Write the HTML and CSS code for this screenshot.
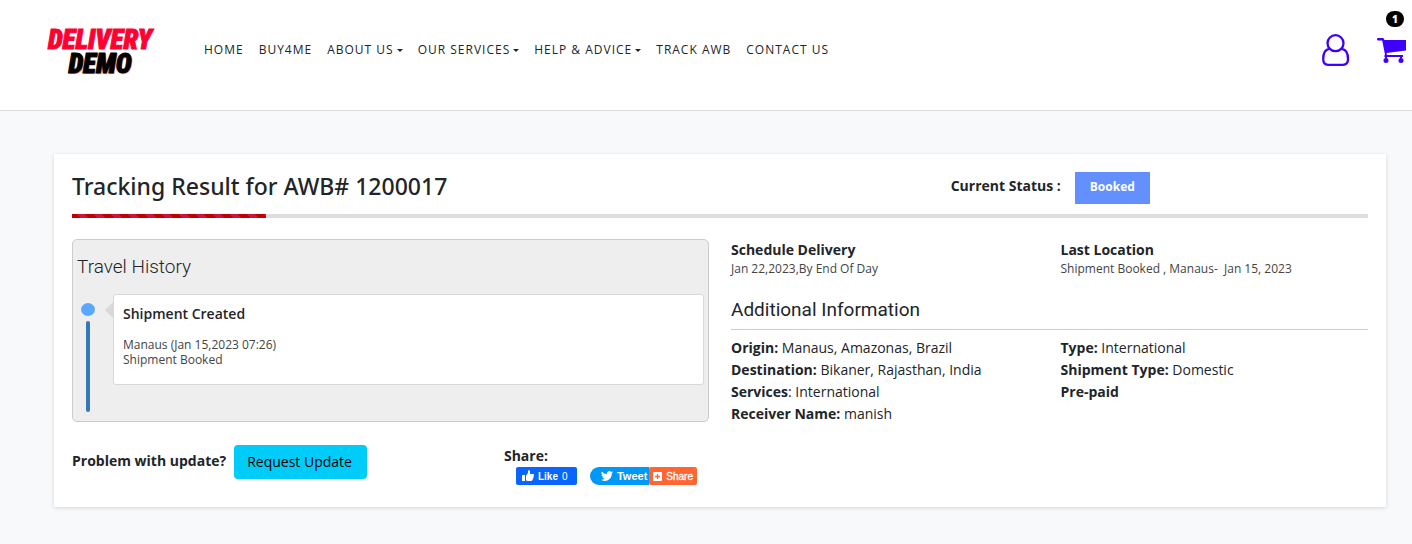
FILE: index.html
```
<!DOCTYPE html>
<html lang="en">
<head>
    <meta charset="UTF-8">
    <meta name="viewport" content="width=device-width, initial-scale=1.0">
    <title>Delivery Demo - Tracking Result</title>
    <link rel="stylesheet" href="styles.css">
</head>
<body>
    <header class="site-header">
        <a class="logo" href="#">
            <span class="logo-top">DELIVERY</span>
            <span class="logo-bottom">DEMO</span>
        </a>
        <nav class="main-nav">
            <a href="#">HOME</a>
            <a href="#">BUY4ME</a>
            <a class="dropdown" href="#">ABOUT US</a>
            <a class="dropdown" href="#">OUR SERVICES</a>
            <a class="dropdown" href="#">HELP &amp; ADVICE</a>
            <a href="#">TRACK AWB</a>
            <a href="#">CONTACT US</a>
        </nav>
        <div class="header-icons">
            <a href="#" aria-label="Account">
                <svg width="28" height="32" viewBox="0 0 28 32" fill="none" stroke="#3d00ff" stroke-width="2.300">
                    <circle cx="13.500" cy="9.200" r="8"/>
                    <path d="M7 14.800C3 15.500 1.200 19.500 1.200 25C1.200 28.800 3 30.800 6 30.800H21C24 30.800 26 28.800 26 25C26 19.500 24 15.500 20 14.800"/>
                </svg>
            </a>
            <a class="cart" href="#" aria-label="Cart">
                <svg width="29" height="26" viewBox="0 0 29 26" fill="#3d00ff">
                    <path d="M1 0H6C7 0 7 1 7.300 2H29V12.500L9.500 15L10 17H26V19H8C7 19 7 18 8 16.500L5.200 2.500H1C-.3 2.500-.3 0 1 0Z"/>
                    <circle cx="9" cy="22.500" r="2.500"/>
                    <circle cx="24" cy="22.500" r="2.500"/>
                    <path d="M8 18h2v3h-2zM23 18h2v3h-2z"/>
                </svg>
                <span class="cart-count">1</span>
            </a>
        </div>
    </header>

    <main class="card">
        <div class="title-row">
            <h1>Tracking Result for AWB# 1200017</h1>
            <div class="status">
                <strong>Current Status :</strong>
                <span class="status-badge">Booked</span>
            </div>
        </div>
        <div class="progress"><div class="progress-bar"></div></div>

        <div class="details">
            <section class="history">
                <h2>Travel History</h2>
                <div class="timeline">
                    <div class="marker">
                        <span class="dot"></span>
                        <span class="line"></span>
                    </div>
                    <div class="event">
                        <h3>Shipment Created</h3>
                        <p>Manaus (Jan 15,2023 07:26)<br>Shipment Booked</p>
                    </div>
                </div>
            </section>

            <section class="info">
                <div class="two-col">
                    <div>
                        <strong>Schedule Delivery</strong>
                        <p class="small">Jan 22,2023,By End Of Day</p>
                    </div>
                    <div>
                        <strong>Last Location</strong>
                        <p class="small">Shipment Booked , Manaus-&nbsp; Jan 15, 2023</p>
                    </div>
                </div>
                <h2>Additional Information</h2>
                <div class="two-col">
                    <div>
                        <p><strong>Origin:</strong> Manaus, Amazonas, Brazil</p>
                        <p><strong>Destination:</strong> Bikaner, Rajasthan, India</p>
                        <p><strong>Services</strong>: International</p>
                        <p><strong>Receiver Name:</strong> manish</p>
                    </div>
                    <div>
                        <p><strong>Type:</strong> International</p>
                        <p><strong>Shipment Type:</strong> Domestic</p>
                        <p><strong>Pre-paid</strong></p>
                    </div>
                </div>
            </section>
        </div>

        <div class="actions">
            <div class="problem">
                <strong>Problem with update?</strong>
                <button class="request-btn" type="button">Request Update</button>
            </div>
            <div class="share">
                <strong>Share:</strong>
                <div class="share-buttons">
                    <button class="share-btn like" type="button">
                        <svg width="12" height="12" viewBox="0 0 12 12" fill="#fff"><path d="M0 5h3v6H0zM4 5.500L6 3V1C6 0 8 0 8 1.500V4H11C12.200 4 12.200 5.500 11.500 6C12 6.500 12 7.500 11 8C11.500 9 11 9.500 10.500 9.600C10.500 10.500 10 11 9 11H6L4 10.500Z"/></svg>
                        <span>Like</span>
                        <span class="count">0</span>
                    </button>
                    <button class="share-btn tweet" type="button">
                        <svg width="12" height="12" viewBox="0 0 24 24" fill="#fff"><path d="M24 4.600a10 10 0 0 1-2.800.8 5 5 0 0 0 2.100-2.700 10 10 0 0 1-3.100 1.200 4.900 4.900 0 0 0-8.400 4.500A14 14 0 0 1 1.700 3.100a4.900 4.900 0 0 0 1.500 6.600 5 5 0 0 1-2.200-.6 4.900 4.900 0 0 0 3.900 4.900 5 5 0 0 1-2.200.1 4.900 4.900 0 0 0 4.600 3.400A9.900 9.900 0 0 1 0 19.500 14 14 0 0 0 21.500 7.100 10 10 0 0 0 24 4.600z"/></svg>
                        <span>Tweet</span>
                    </button>
                    <button class="share-btn more" type="button">
                        <svg width="9" height="9" viewBox="0 0 9 9"><rect width="9" height="9" rx="1" fill="#fff"/><path d="M4.500 2v5M2 4.500h5" stroke="#ff6632" stroke-width="1.300"/></svg>
                        <span>Share</span>
                    </button>
                </div>
            </div>
        </div>
    </main>
</body>
</html>
```
FILE: styles.css
```
* {
    box-sizing: border-box;
}

body {
    margin: 0;
    min-height: 100vh;
    background: #f8f9fb;
    color: #212529;
    font-family: 'Open Sans', 'Noto Sans', sans-serif;
    font-size: 14px;
    line-height: 22px;
}

h1, h2, h3, p {
    margin: 0;
}

a {
    color: inherit;
    text-decoration: none;
}

button {
    border: none;
    cursor: pointer;
}

.site-header {
    display: flex;
    align-items: center;
    background: #fff;
    border-bottom: 1px solid #dcdcdc;
    padding: 24px 6px 34px 46px;
}

.logo {
    display: flex;
    flex-direction: column;
    align-items: center;
    width: 108px;
    padding-top: 4px;
    font-family: 'Roboto Condensed', 'Roboto', sans-serif;
    font-size: 27px;
    font-weight: 900;
    font-style: italic;
    line-height: 24px;
    -webkit-text-stroke: 1px currentColor;
}

.logo-top {
    color: #ff0030;
}

.logo-bottom {
    color: #000;
    text-shadow: 1px 1px 1px #ff8080;
}

.main-nav {
    display: flex;
    gap: 15px;
    margin-left: 50px;
    font-size: 12px;
    letter-spacing: 1px;
}

.dropdown {
    display: flex;
    align-items: center;
    gap: 3px;
}

.dropdown::after {
    content: '';
    border: 3px solid transparent;
    border-top-color: #212529;
    border-bottom: none;
}

.header-icons {
    display: flex;
    gap: 27px;
    margin-left: auto;
}

.header-icons svg {
    display: block;
}

.cart {
    position: relative;
    padding-top: 4px;
}

.cart-count {
    position: absolute;
    top: -23px;
    right: 2px;
    width: 18px;
    border-radius: 8px;
    background: #000;
    color: #fff;
    font-size: 10px;
    font-weight: 800;
    line-height: 16px;
    text-align: center;
}

.card {
    margin: 43px 26px 37px 54px;
    padding: 18px 18px 22px;
    background: #fff;
    box-shadow: 0 1px 4px rgba(0, 0, 0, 0.15);
}

.title-row {
    display: grid;
    grid-template-columns: repeat(12, 1fr);
    column-gap: 22px;
    align-items: start;
    margin-bottom: 10px;
}

.title-row h1 {
    grid-column: span 8;
    font-family: 'Noto Sans', 'Open Sans', sans-serif;
    font-size: 23px;
    font-weight: 500;
    line-height: 28px;
}

.status {
    grid-column: span 4;
    display: flex;
    gap: 14px;
    line-height: 28px;
}

.status-badge {
    padding: 0 15px 2px;
    background: #638fff;
    color: #fff;
    font-size: 12px;
    font-weight: 700;
    line-height: 30px;
}

.progress {
    height: 4px;
    background: #ddd;
}

.progress-bar {
    width: 15%;
    height: 100%;
    background: repeating-linear-gradient(45deg, #c00000 0 6px, #cc143c 6px 12px);
}

.details {
    display: grid;
    grid-template-columns: 1fr 1fr;
    column-gap: 22px;
    align-items: start;
    margin-top: 21px;
}

.history {
    padding: 14px 4px 9px;
    border: 1px solid #ccc;
    border-radius: 5px;
    background: #eee;
}

.history h2 {
    margin-bottom: 14px;
    font-family: 'Roboto', sans-serif;
    font-size: 19px;
    font-weight: 300;
    line-height: 26px;
}

.timeline {
    display: flex;
    gap: 18px;
}

.marker {
    display: flex;
    flex-direction: column;
    align-items: center;
    gap: 5px;
    margin-left: 4px;
    padding-top: 9px;
}

.dot {
    width: 14px;
    height: 13px;
    border-radius: 50%;
    background: #59a8ff;
}

.line {
    width: 4px;
    height: 91px;
    border-radius: 2px;
    background: #337ab7;
}

.event {
    position: relative;
    flex: 1;
    align-self: flex-start;
    padding: 8px 9px 17px;
    border: 1px solid #d9d9d9;
    border-radius: 3px;
    background: #fff;
}

.event::before {
    content: '';
    position: absolute;
    top: 7px;
    left: -9px;
    border: 8px solid transparent;
    border-right-color: #d9d9d9;
    border-left: none;
}

.event h3 {
    margin-bottom: 12px;
    font-size: 14px;
    font-weight: 600;
    line-height: 22px;
}

.event p {
    color: #444;
    font-size: 12px;
    line-height: 15px;
}

.two-col {
    display: grid;
    grid-template-columns: 1fr 1fr;
    column-gap: 22px;
}

.two-col .small {
    color: #444;
    font-size: 12px;
    line-height: 16px;
}

.info h2 {
    margin: 19px 0 7px;
    padding-bottom: 5px;
    border-bottom: 1px solid #ccc;
    font-family: 'Roboto', sans-serif;
    font-size: 19px;
    font-weight: 400;
    line-height: 28px;
}

.actions {
    display: flex;
    margin-top: 20px;
}

.problem {
    display: flex;
    align-items: flex-start;
    gap: 8px;
    width: 33.33%;
    line-height: 32px;
}

.request-btn {
    padding: 0 15px 0 13px;
    border-radius: 4px;
    background: #00ccfa;
    color: #000;
    font-family: inherit;
    font-size: 14px;
    line-height: 34px;
}

.share-buttons {
    display: flex;
    padding-left: 12px;
}

.share-btn {
    display: flex;
    align-items: center;
    gap: 4px;
    height: 18px;
    color: #fff;
    font-family: 'Liberation Sans', Arial, sans-serif;
    font-size: 10px;
    border-radius: 2px;
}

.like {
    width: 61px;
    margin-right: 13px;
    background: #0866ff;
    font-weight: 700;
}

.count {
    font-weight: 400;
}

.tweet {
    padding: 0 2px 0 11px;
    border-radius: 9px 0 0 9px;
    background: #0098f7;
    font-size: 11px;
    font-weight: 700;
}

.more {
    padding: 0 4px;
    background: #ff6632;
    -webkit-text-stroke: 0.3px #fff;
}
```
